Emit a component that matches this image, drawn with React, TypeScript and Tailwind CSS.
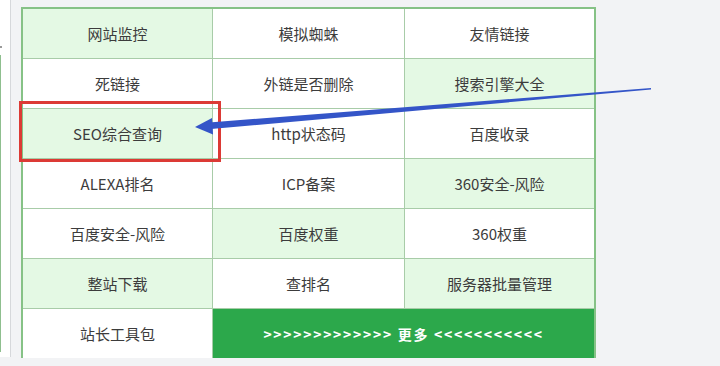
import React from "react";

type Cell = { label: string; green: boolean };

const rows: Cell[][] = [
  [
    { label: "网站监控", green: true },
    { label: "模拟蜘蛛", green: false },
    { label: "友情链接", green: false },
  ],
  [
    { label: "死链接", green: false },
    { label: "外链是否删除", green: false },
    { label: "搜索引擎大全", green: true },
  ],
  [
    { label: "SEO综合查询", green: true },
    { label: "http状态码", green: false },
    { label: "百度收录", green: false },
  ],
  [
    { label: "ALEXA排名", green: false },
    { label: "ICP备案", green: false },
    { label: "360安全-风险", green: true },
  ],
  [
    { label: "百度安全-风险", green: false },
    { label: "百度权重", green: true },
    { label: "360权重", green: false },
  ],
  [
    { label: "整站下载", green: true },
    { label: "查排名", green: false },
    { label: "服务器批量管理", green: true },
  ],
];

const font = { fontFamily: '"Noto Sans CJK SC", "Noto Sans", sans-serif' };

export default function App() {
  return (
    <div
      className="relative w-[720px] h-[366px] overflow-hidden bg-[#f2f3f5] flex"
      style={font}
    >
      {/* left panel */}
      <div className="relative w-[11px] h-[357px] bg-white border-r border-[#d6d8db] shrink-0">
        <div className="absolute left-0 top-[55px] w-[1px] h-[297px] bg-[#8fbf8f]" />
        <div className="absolute left-0 top-[46px] w-[2px] h-[2px] bg-[#9a9a9a]" />
      </div>

      {/* table */}
      <div className="ml-[10px] mt-[7px] w-[575px] h-[351px] border-2 border-[#86c286] bg-white grid grid-cols-[190px_192px_1fr] grid-rows-[50px_50px_50px_50px_50px_50px_49px] text-[15px] text-[#3c3c3c]">
        {rows.map((r, ri) =>
          r.map((c, ci) => (
            <div
              key={`${ri}-${ci}`}
              className={`flex items-center justify-center border-b border-[#a8cca8] ${
                ci < 2 ? "border-r" : ""
              } ${c.green ? "bg-[#e4f9e4]" : "bg-white"}`}
            >
              <span className="pt-[2px]">{c.label}</span>
            </div>
          ))
        )}
        <div className="flex items-center justify-center border-r border-[#a8cca8] bg-white">
          <span className="pt-[2px]">站长工具包</span>
        </div>
        <div className="col-span-2 flex items-center justify-center bg-[#2ca84b] text-white font-bold text-[14px] tracking-[1.7px]">
          <span className="pt-[1px]">{">>>>>>>>>>>>> 更多 <<<<<<<<<<<"}</span>
        </div>
      </div>

      {/* red highlight box */}
      <div className="absolute left-[19px] top-[101px] w-[202px] h-[61px] border-[3px] border-[#dc3a35]" />

      {/* blue arrow */}
      <svg
        className="absolute left-0 top-0 pointer-events-none"
        width="720"
        height="366"
        viewBox="0 0 720 366"
      >
        <polygon
          points="209,122.5 651,88 651,89.5 211,129"
          fill="#3455c8"
        />
        <polygon points="195,127 212,118 213,134.5" fill="#3455c8" />
      </svg>
    </div>
  );
}
